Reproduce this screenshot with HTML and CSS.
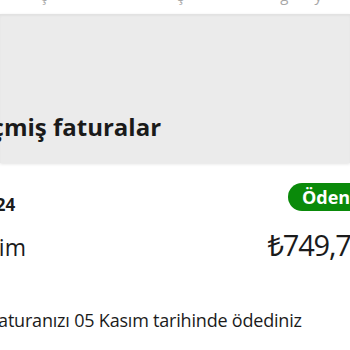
FILE: index.html
```html
<!DOCTYPE html>
<html lang="tr">
<head>
<meta charset="utf-8">
<link rel="stylesheet" href="styles.css">
</head>
<body>
<div class="viewport">
  <div class="topstrip">
    <div class="tabs">
      <span class="tab t1">ç</span>
      <span class="tab t2">ş</span>
      <span class="tab t3">ğ</span>
      <span class="tab t4">y</span>
    </div>
  </div>
  <section class="band">
    <h1 class="title">Geçmiş faturalar</h1>
  </section>
  <section class="bill">
    <div class="row1">
      <span class="date">Ekim 2024</span>
      <span class="badge">Ödendi</span>
    </div>
    <div class="row2">
      <span class="month">Ekim</span>
      <span class="amount">₺749,75</span>
    </div>
    <p class="note">Faturanızı 05 Kasım tarihinde ödediniz</p>
  </section>
</div>
</body>
</html>
```
FILE: styles.css
```css
html, body {
  margin: 0;
  padding: 0;
  background: #ffffff;
  overflow: hidden;
}
body {
  width: 350px;
  height: 350px;
  font-family: "Open Sans", "Noto Sans", sans-serif;
  color: #1b1b1b;
}
.viewport {
  width: 350px;
  overflow: hidden;
}
.topstrip {
  height: 14px;
  overflow: hidden;
  background: #fff;
}
.tabs {
  display: flex;
  margin-top: -14px;
  height: 18px;
  font-size: 15px;
  line-height: 18px;
  color: #a8a8a8;
}
.t1 { margin-left: 40px; }
.t2 { margin-left: 130px; }
.t3 { margin-left: 96px; }
.t4 { margin-left: 26px; }
.band {
  height: 149px;
  background: #ebebeb;
  box-shadow: inset 0 2px 2px rgba(0,0,0,0.04), 0 1px 3px rgba(0,0,0,0.12);
  display: flex;
  align-items: flex-end;
  position: relative;
}
.title {
  margin: 0 0 21px -40px;
  font-size: 24px;
  font-weight: 700;
  line-height: 30px;
  white-space: nowrap;
  color: #1a1a1a;
}
.bill {
  padding-top: 20px;
}
.row1 {
  display: flex;
  justify-content: space-between;
  align-items: center;
  height: 28px;
  margin-left: -70px;
  margin-right: -31px;
}
.date {
  font-size: 17px;
  font-weight: 700;
  margin-top: 14px;
}
.badge {
  background: #0a8a0a;
  color: #fff;
  font-weight: 700;
  font-size: 18px;
  line-height: 28px;
  height: 28px;
  padding: 0 14px;
  border-radius: 14px;
}
.row2 {
  display: flex;
  justify-content: space-between;
  align-items: baseline;
  margin-left: -26px;
  margin-right: -16px;
  margin-top: 14px;
}
.month {
  font-size: 23px;
}
.amount {
  font-size: 29px;
  font-weight: 400;
  letter-spacing: -1.2px;
}
.note {
  margin: 44px 0 0 -11px;
  font-size: 18px;
  letter-spacing: -0.2px;
  white-space: nowrap;
}
```
